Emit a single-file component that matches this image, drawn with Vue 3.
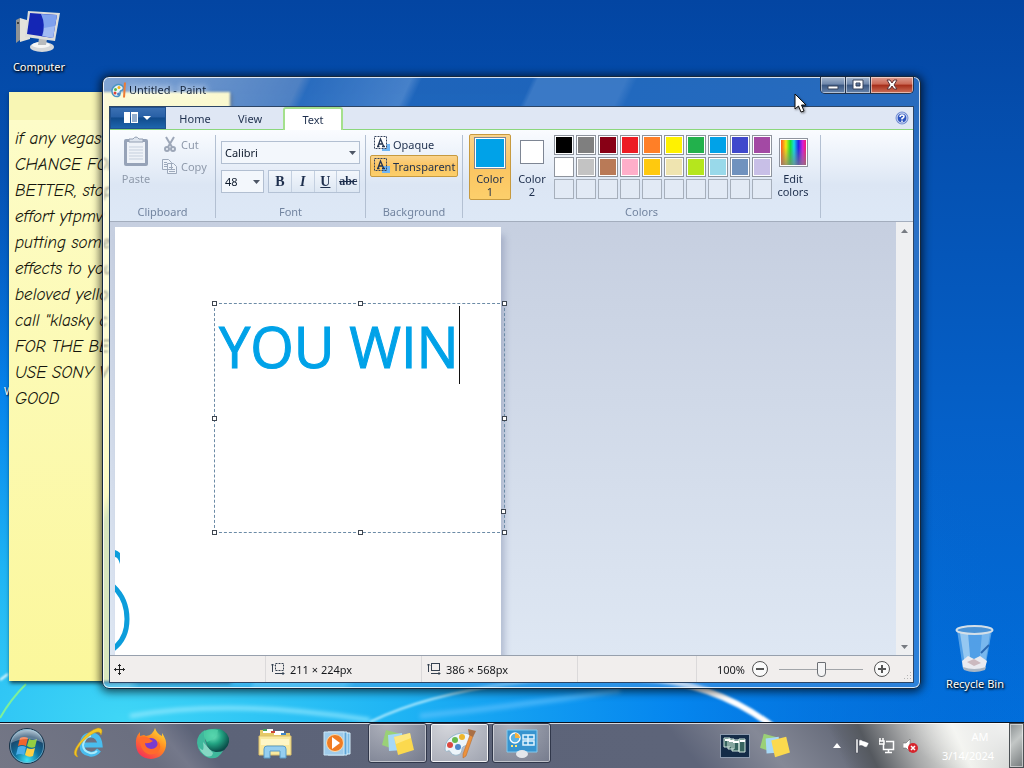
<template>
  <div class="screen">
    <svg class="wallpaper" viewBox="0 0 1024 768" preserveAspectRatio="none" aria-hidden="true">
      <defs>
        <linearGradient id="sky" x1="0" y1="0" x2="0" y2="1">
          <stop offset="0" stop-color="#0345a2" />
          <stop offset="0.2" stop-color="#0550b0" />
          <stop offset="0.55" stop-color="#0560c8" />
          <stop offset="1" stop-color="#0070de" />
        </linearGradient>
        <radialGradient id="glow" cx="0.12" cy="0.92" r="0.9">
          <stop offset="0" stop-color="#3fd6f6" />
          <stop offset="0.3" stop-color="#1fb4f4" />
          <stop offset="0.6" stop-color="#068af2" stop-opacity="0.85" />
          <stop offset="1" stop-color="#0566d0" stop-opacity="0" />
        </radialGradient>
        <filter id="soft"><feGaussianBlur stdDeviation="2" /></filter>
        <filter id="soft-edge"><feGaussianBlur stdDeviation="1" /></filter>
      </defs>
      <rect width="1024" height="768" fill="url(#sky)" />
      <rect y="150" width="1024" height="618" fill="url(#glow)" />
      <g fill="none" filter="url(#soft)">
        <path d="M130 716Q230 698 370 720" stroke="#9fecff" stroke-width="3" />
        <path d="M420 716Q520 706 620 690" stroke="#6cc6ff" stroke-width="5" opacity="0.6" />
      </g>
      <g fill="none" filter="url(#soft-edge)">
        <path d="M370 722Q440 688 560 678" stroke="#bdefff" stroke-width="2" />
        <path d="M640 678Q715 682 775 728" stroke="#fff" stroke-width="6" />
        <path d="M0 680L8 674" stroke="#fff" stroke-width="2" />
      </g>
      <path d="M0 718Q10 700 26 684" fill="none" stroke="#7df09a" stroke-width="2" />
    </svg>

    <main class="desktop">
      <a class="shortcut computer" href="#computer">
        <svg width="48" height="44" viewBox="0 0 48 44" aria-hidden="true">
          <path d="M1 10L5 8V30L1 33Z" fill="#8f9294" />
          <path d="M5 8L15 11V29L5 32Z" fill="#e4e3dc" />
          <circle cx="3" cy="13" r="1" fill="#222" />
          <ellipse cx="27" cy="37" rx="12" ry="5" fill="#d5d8da" />
          <ellipse cx="26" cy="35" rx="9" ry="3" fill="#f5f6f6" />
          <path d="M24 28L32 29L31 35H23Z" fill="#b8bbbd" />
          <path d="M13 1L45 3L40 31L10 27Z" fill="#dcdedb" />
          <path d="M15 3L42 5L38 28L12 24Z" fill="#1426b5" />
          <path d="M26 4L42 5L38 28L27 26Q31 15 26 4Z" fill="#7ea1ee" />
          <path d="M29 18L40 16L38 28L28 26Z" fill="#b9cdf6" opacity="0.6" />
        </svg>
        <span>Computer</span>
      </a>
      <span class="hidden-label">W</span>

      <article class="note">
        <p v-for="line in noteLines" :key="line">{{ line }}</p>
      </article>

      <a class="shortcut bin" href="#recycle-bin">
        <svg width="42" height="48" viewBox="0 0 42 48" aria-hidden="true">
          <path d="M3 5L9 44Q20 49 31 44L38 5Z" fill="#6eb2ec" opacity="0.75" />
          <path d="M6 8L11 40L17 42L14 8Z" fill="#c3e2f8" opacity="0.6" />
          <path d="M28 8L25 42L31 40L36 8Z" fill="#9fd0f6" opacity="0.5" />
          <path d="M8 36L14 31L20 34L26 31L33 36L31 43Q20 47 9 43Z" fill="#e9eaf0" />
          <path d="M13 37L20 34L27 38L20 41Z" fill="#cbb9bf" />
          <path d="M9 42Q20 46 32 42L31 45Q20 49 10 45Z" fill="#a9b6c4" />
          <ellipse cx="20.500" cy="5" rx="18" ry="4" fill="#4b93d6" stroke="#d4dfe8" stroke-width="2" />
          <path d="M27 28L35 20" stroke="#2a68b2" stroke-width="2" />
        </svg>
        <span>Recycle Bin</span>
      </a>

      <section class="window" aria-label="Untitled - Paint">
        <header class="titlebar">
          <svg class="app-icon" width="16" height="16" viewBox="0 0 32 32" aria-hidden="true">
            <path d="M2 19C1 9 12 3 20 6C28 10 25 16 19 18C16 20 22 26 14 29C7 30 2 26 2 19Z" fill="#e9f4fb" stroke="#4a94c4" stroke-width="3" />
            <circle cx="9" cy="15" r="3" fill="#57b848" /><circle cx="16" cy="11" r="3" fill="#f3b21c" />
            <circle cx="8" cy="22" r="3" fill="#dc4537" /><circle cx="15" cy="24" r="3" fill="#4e84c6" />
            <path d="M28 1L26 31" stroke="#ee7830" stroke-width="4" />
          </svg>
          <h1>Untitled - Paint</h1>
          <div class="window-buttons">
            <button type="button" aria-label="Minimize">
              <svg width="14" height="12" viewBox="0 0 14 12"><path d="M2 7H12V10H2Z" fill="#fff" stroke="#38445c" /></svg>
            </button>
            <button type="button" aria-label="Maximize">
              <svg width="14" height="12" viewBox="0 0 14 12"><path d="M2 1H12V10H2ZM5 4V7H9V4Z" fill="#fff" stroke="#38445c" fill-rule="evenodd" /></svg>
            </button>
            <button type="button" class="close" aria-label="Close">
              <svg width="14" height="12" viewBox="0 0 14 12"><path d="M2 1H5L7 4L9 1H12L9 6L12 10H9L7 7L5 10H2L5 6Z" fill="#fff" stroke="#5c3238" /></svg>
            </button>
          </div>
        </header>

        <div class="client">
          <nav class="tabs">
            <button type="button" class="file-menu" aria-label="Paint menu">
              <svg width="28" height="12" viewBox="0 0 28 12">
                <path d="M0 0H6V11H0ZM7 0H14V11H7Z" fill="#fff" />
                <path d="M8 3H13M8 5H13M8 7H13M8 9H13" stroke="#2c609f" />
                <path d="M19 4H27L23 8Z" fill="#fff" />
              </svg>
            </button>
            <button
              v-for="tab in tabs"
              :key="tab"
              type="button"
              class="tab"
              :class="{ active: tab === activeTab }"
              @click="activeTab = tab"
            >{{ tab }}</button>
            <button type="button" class="help" aria-label="Help">
              <svg width="14" height="14" viewBox="0 0 14 14">
                <circle cx="7" cy="7" r="6" fill="#2c55c0" stroke="#7793d6" />
                <circle cx="7" cy="7" r="5" fill="none" stroke="#e8eefb" />
                <path d="M5 6Q5 4 7 4T9 5.500Q9 6.500 7 7.500V8.500M7 9.500V11" fill="none" stroke="#fff" stroke-width="1.500" />
              </svg>
            </button>
          </nav>

          <div class="ribbon">
            <div class="group clipboard">
              <div class="group-body">
                <button type="button" class="paste" disabled>
                  <svg width="28" height="32" viewBox="0 0 28 32">
                    <rect x="2" y="3" width="24" height="27" rx="2" fill="#97a3b8" />
                    <rect x="5" y="6" width="18" height="21" fill="#eef2f8" />
                    <path d="M7 11H21M7 14H21M7 17H21M7 20H21M7 23H21" stroke="#c5cfdd" />
                    <path d="M7 6V3H11Q14 -1 17 3H21V6Z" fill="#dde4ee" stroke="#929eb1" />
                  </svg>
                  <span>Paste</span>
                </button>
                <div class="stack">
                  <button type="button" class="small" disabled>
                    <svg width="16" height="16" viewBox="0 0 16 16" fill="none" stroke="#9da7b8" stroke-width="2">
                      <path d="M4 1L10 11M12 1L6 11" /><circle cx="5" cy="13" r="2" /><circle cx="11" cy="13" r="2" />
                    </svg>
                    Cut
                  </button>
                  <button type="button" class="small" disabled>
                    <svg width="16" height="16" viewBox="0 0 16 16" fill="#eef3fa" stroke="#9da9bb">
                      <path d="M.5 1.500H6.500L9.500 4.500V11.500H.5ZM5.500 5.500H11.500L14.500 8.500V15.500H5.500Z" />
                      <path d="M2 4.500H5M2 6.500H5M2 8.500H5M7 9.500H11M7 11.500H13M7 13.500H13" />
                    </svg>
                    Copy
                  </button>
                </div>
              </div>
              <h2>Clipboard</h2>
            </div>

            <div class="group font">
              <div class="group-body font-body">
                <label class="combo">
                  <select v-model="family" aria-label="Font family"><option>Calibri</option></select>
                  <svg width="7" height="4" viewBox="0 0 7 4"><path d="M0 0H7L3.500 4Z" fill="#4d5665" /></svg>
                </label>
                <div class="font-row">
                  <label class="combo size">
                    <select v-model="size" aria-label="Font size"><option>48</option></select>
                    <svg width="7" height="4" viewBox="0 0 7 4"><path d="M0 0H7L3.500 4Z" fill="#4d5665" /></svg>
                  </label>
                  <div class="formats">
                    <button type="button" aria-label="Bold"><b>B</b></button>
                    <button type="button" aria-label="Italic"><i>I</i></button>
                    <button type="button" aria-label="Underline"><u>U</u></button>
                    <button type="button" aria-label="Strikethrough" class="strike"><s>abc</s></button>
                  </div>
                </div>
              </div>
              <h2>Font</h2>
            </div>

            <div class="group background">
              <div class="group-body stack">
                <button
                  v-for="mode in ['Opaque', 'Transparent']"
                  :key="mode"
                  type="button"
                  class="mode"
                  :class="{ picked: mode === background }"
                  :aria-pressed="mode === background"
                  @click="background = mode"
                >
                  <svg width="16" height="16" viewBox="0 0 16 16">
                    <path d="M8 8H16V15H8Z" fill="#70b5f3" />
                    <rect x=".5" y=".5" width="12" height="12" :fill="mode === 'Opaque' ? '#fff' : 'none'" stroke="#34425c" stroke-dasharray="2 1" />
                    <path d="M3 10.500H5.500M8 10.500H11M4 10L6.500 3L9.500 10M5 8H8" fill="none" stroke="#24344f" stroke-width="1.300" />
                  </svg>
                  {{ mode }}
                </button>
              </div>
              <h2>Background</h2>
            </div>

            <div class="group colors">
              <div class="group-body">
                <button type="button" class="color-slot picked">
                  <span class="chip big"></span>
                  <span>Color<br />1</span>
                </button>
                <button type="button" class="color-slot second">
                  <span class="chip"></span>
                  <span>Color<br />2</span>
                </button>
                <div class="palette">
                  <button
                    v-for="(c, i) in palette"
                    :key="i"
                    type="button"
                    :class="{ empty: !c }"
                    :style="{ backgroundColor: c }"
                    :aria-label="c || 'Custom color'"
                  ></button>
                </div>
                <button type="button" class="edit-colors">
                  <span class="rainbow"></span>
                  <span>Edit<br />colors</span>
                </button>
              </div>
              <h2>Colors</h2>
            </div>
          </div>

          <div class="workspace">
            <div class="view">
              <div class="paper">
                <svg class="stroke" width="20" height="120" viewBox="0 0 20 120" fill="none" aria-hidden="true">
                  <path d="M0 10Q3 11 5 13V24Q3 17 0 17Z" fill="#0c9ddb" />
                  <path d="M-2 46Q12 59 12 79T-2 109" stroke="#0c9ddb" stroke-width="5" />
                </svg>
                <div class="textbox">
                  <textarea v-model="text" aria-label="Canvas text" spellcheck="false"></textarea>
                  <span class="caret"></span>
                  <i v-for="h in handles" :key="h" class="handle" :class="h"></i>
                </div>
              </div>
            </div>
            <div class="scrollbar">
              <button type="button" aria-label="Scroll up">
                <svg width="7" height="4" viewBox="0 0 7 4"><path d="M0 4H7L3.500 0Z" fill="#777b82" /></svg>
              </button>
              <button type="button" aria-label="Scroll down">
                <svg width="7" height="4" viewBox="0 0 7 4"><path d="M0 0H7L3.500 4Z" fill="#777b82" /></svg>
              </button>
            </div>
          </div>

          <footer class="status">
            <div class="cell">
              <svg width="11" height="11" viewBox="0 0 11 11" stroke="#222" fill="none">
                <path d="M5.500 0V11M0 5.500H11M4 2L5.500 .5L7 2M4 9L5.500 10.500L7 9M2 4L.5 5.500L2 7M9 4L10.500 5.500L9 7" />
              </svg>
            </div>
            <div class="cell">
              <svg width="14" height="12" viewBox="0 0 14 12" fill="none" stroke="#34404f">
                <path d="M1.500 9V1M0 2.500L1.500 1L3 2.500M4 10.500H13M11.500 9L13 10.500L11.500 12" />
                <rect x="4.500" y=".5" width="8" height="7" stroke-dasharray="2 1" />
              </svg>
              211 × 224px
            </div>
            <div class="cell">
              <svg width="14" height="12" viewBox="0 0 14 12" fill="none" stroke="#34404f">
                <path d="M1.500 9V1M0 2.500L1.500 1L3 2.500M4 10.500H13M11.500 9L13 10.500L11.500 12" />
                <rect x="4.500" y=".5" width="8" height="7" />
              </svg>
              386 × 568px
            </div>
            <div class="cell filler"></div>
            <div class="zoom">
              <label for="zoom-range">{{ zoom * 2 }}%</label>
              <button type="button" aria-label="Zoom out">
                <svg width="16" height="16" viewBox="0 0 16 16" fill="#fafafa" stroke="#555"><circle cx="8" cy="8" r="7.500" /><path d="M4 8H12" stroke-width="2" /></svg>
              </button>
              <input id="zoom-range" v-model.number="zoom" type="range" min="0" max="100" />
              <button type="button" aria-label="Zoom in">
                <svg width="16" height="16" viewBox="0 0 16 16" fill="#fafafa" stroke="#555"><circle cx="8" cy="8" r="7.500" /><path d="M4 8H12M8 4V12" stroke-width="2" /></svg>
              </button>
              <svg class="grip" width="8" height="8" viewBox="0 0 8 8" fill="#b5b5b5"><path d="M6 0h1v1H6zM3 3h1v1H3zM6 3h1v1H6zM0 6h1v1H0zM3 6h1v1H3zM6 6h1v1H6z" /></svg>
            </div>
          </footer>
        </div>
      </section>

      <svg class="cursor" width="13" height="20" viewBox="0 0 13 20" aria-hidden="true">
        <path d="M1 1V16L4.500 13L7 19L10 18L7.500 12H12Z" fill="#fff" stroke="#111" />
      </svg>
    </main>

    <footer class="taskbar">
      <button type="button" class="start" aria-label="Start">
        <svg width="38" height="38" viewBox="0 0 38 38">
          <defs>
            <radialGradient id="orb" cx=".5" cy=".9" r=".9">
              <stop offset="0" stop-color="#3de3f5" /><stop offset=".4" stop-color="#0f719e" />
              <stop offset=".75" stop-color="#1a4468" /><stop offset="1" stop-color="#a8c3d4" />
            </radialGradient>
          </defs>
          <circle cx="19" cy="19" r="17.500" fill="url(#orb)" stroke="#173248" />
          <circle cx="19" cy="19" r="16.500" fill="none" stroke="#8dc0d8" opacity=".6" />
          <path d="M12 11Q16 9 20 11L18 19Q14 17 10 19Z" fill="#f0642c" />
          <path d="M21 12Q25 14 29 12L27 20Q23 22 19 19Z" fill="#93ce42" />
          <path d="M10 20Q14 18 18 20L16 28Q12 26 8 28Z" fill="#4aaeea" />
          <path d="M19 21Q23 23 27 21L25 29Q21 31 17 28Z" fill="#fcd044" />
          <path d="M3 16Q5 4 19 3T35 16Q19 8 3 16Z" fill="#fff" opacity=".3" />
        </svg>
      </button>
      <button type="button" class="pin" aria-label="Internet Explorer">
        <svg width="32" height="32" viewBox="0 0 32 32" fill="none">
          <path d="M26 23Q22 28 17 27Q9 26 9 18Q10 8 18 8Q26 8 27 18H11" stroke="#49bdee" stroke-width="5" />
          <path d="M24 24Q21 27 17 26Q10 24 10 18Q12 9 18 9" stroke="#a9ebfc" stroke-width="2" />
          <path d="M5 30Q-3 28 6 16Q16 3 25 1Q31 1 28 8Q27 3 21 6Q11 11 5 21Q2 27 5 30Z" fill="#f3c724" stroke="#cf9b12" stroke-width=".5" />
        </svg>
      </button>
      <button type="button" class="pin" aria-label="Firefox">
        <svg width="32" height="32" viewBox="0 0 32 32">
          <defs><linearGradient id="fox" x1=".9" y1="0" x2=".2" y2="1"><stop offset="0" stop-color="#ffe43c" /><stop offset=".45" stop-color="#ff8a20" /><stop offset="1" stop-color="#f52b5a" /></linearGradient></defs>
          <path d="M20 1Q22 7 27 9V6Q32 13 31 19Q29 31 16 32Q2 31 1 18Q0 10 5 5V9L9 8L11 9Q18 8 20 1Z" fill="url(#fox)" />
          <circle cx="16" cy="18" r="7" fill="#7a3bd0" />
          <path d="M5 10Q12 8 16 13L18 14Q14 17 10 16Q10 21 16 22Q23 22 23 14Q28 20 22 26Q13 30 8 23Q4 18 5 10Z" fill="#ff6b2c" />
        </svg>
      </button>
      <button type="button" class="pin" aria-label="Browser">
        <svg width="34" height="32" viewBox="0 0 34 32">
          <defs><radialGradient id="gem" cx=".35" cy=".3" r=".7"><stop offset="0" stop-color="#79ecc4" /><stop offset=".5" stop-color="#23a483" /><stop offset="1" stop-color="#0a4d49" /></radialGradient></defs>
          <path d="M9 3Q1 7 1 16Q2 27 13 31Q22 33 27 24Q16 27 11 19Q8 12 9 3Z" fill="#3fb89c" />
          <path d="M3 20Q9 28 7 15L17 26Q16 31 10 29Q5 26 3 20Z" fill="#b5ece0" opacity=".6" />
          <path d="M8 4Q14 1 24 2Q34 6 33 15Q31 25 20 25Q12 24 10 15Z" fill="url(#gem)" />
          <path d="M8 4Q14 1 22 3Q22 11 11 15Q7 10 8 4Z" fill="#4fcfa8" opacity=".8" />
        </svg>
      </button>
      <button type="button" class="pin" aria-label="Windows Explorer">
        <svg width="34" height="32" viewBox="0 0 34 32">
          <path d="M2 3H13L15 6H32V28H2Z" fill="#e6c967" />
          <path d="M5 2H15V6H5ZM16 4H26V8H16Z" fill="#fff" /><path d="M5 2H9V4H5Z" fill="#3aa25b" /><path d="M13 4H17V6H13Z" fill="#cf4838" /><path d="M23 6H28V8H23Z" fill="#3f86c9" />
          <path d="M1 9H33V28H1Z" fill="#f9e9a0" stroke="#dbc06a" />
          <path d="M3 12H31V18H3Z" fill="#fff9cf" opacity=".8" />
          <path d="M6 31V22Q6 19 9 19H25Q28 19 28 22V31H22V24H12V31Z" fill="#95cef0" stroke="#5a9cc8" />
        </svg>
      </button>
      <button type="button" class="pin" aria-label="Media Player">
        <svg width="30" height="28" viewBox="0 0 30 28">
          <path d="M9 4H28V25H9Z" fill="#7dbbe5" stroke="#d6effc" /><path d="M6 3H25V26H6Z" fill="#5fa6d8" stroke="#d6effc" />
          <path d="M2 3H22V26H2Z" fill="#9fcbea" stroke="#cbe7f7" />
          <circle cx="13" cy="14" r="8.500" fill="#f07c22" stroke="#fbdcae" /><path d="M10 8L18 14L10 20Z" fill="#fff" />
        </svg>
      </button>
      <button type="button" class="task notes" aria-label="Sticky Notes">
        <svg width="34" height="30" viewBox="0 0 34 30">
          <path d="M5 2L20 6L15 22L1 17Z" fill="#9ad077" /><path d="M7 7L21 5L22 22L8 23Z" fill="#a6d8f6" />
          <path d="M13 9L29 5L33 22L17 27Z" fill="#fbd94e" /><path d="M13 9L29 5L30 10L15 16Z" fill="#fff0a1" opacity=".6" />
        </svg>
      </button>
      <button type="button" class="task current" aria-label="Paint">
        <svg width="34" height="32" viewBox="0 0 34 32">
          <path d="M2 21C2 12 12 6 20 6C28 6 31 11 27 16C24 20 19 18 19 22C19 27 15 29 11 28C7 27 8 23 5 24C3 25 2 24 2 21Z" fill="#edf5fa" stroke="#97b6ca" />
          <circle cx="7" cy="18" r="3" fill="#db4941" /><circle cx="12" cy="13" r="3" fill="#69b94d" /><circle cx="19" cy="10" r="3" fill="#edb62d" /><circle cx="15" cy="20" r="3" fill="#4d88cb" />
          <path d="M27 8L30 9L23 29L20 31L20 27Z" fill="#ec923c" stroke="#b96524" stroke-width=".5" /><path d="M25 2L33 4L30 10L26 8Z" fill="#a96f45" />
        </svg>
      </button>
      <button type="button" class="task" aria-label="Control Panel">
        <svg width="34" height="32" viewBox="0 0 34 32">
          <path d="M2 3H32V25H2Z" fill="#3794cf" stroke="#82c9ed" /><circle cx="10" cy="11" r="5" fill="#5bb1e2" stroke="#fff" stroke-width="1.500" />
          <path d="M10 11V6A5 5 0 0 1 15 11Z" fill="#f6b13e" /><path d="M18 8H29V12H18ZM18 14H29V18H18ZM23 8V18" fill="none" stroke="#e1f4ff" stroke-width="1.500" />
          <path d="M6 19H8M10 19H12" stroke="#ffe678" stroke-width="2" /><ellipse cx="17" cy="27" rx="6" ry="4" fill="#e4e7eb" />
        </svg>
      </button>

      <div class="tray">
        <button type="button" class="deskband" aria-label="Window switcher">
          <svg width="30" height="24" viewBox="0 0 30 24">
            <rect x=".5" y=".5" width="29" height="23" fill="#142c48" stroke="#8c9aae" />
            <g fill="#37645f" stroke="#d4e8e0"><path d="M4 4H10V13H4ZM8 5H14V15H8ZM12 6H19V17H12ZM19 5H25V18H19Z" /></g>
            <path d="M5 6H10M9 7H14M13 8H19M20 7H25" stroke="#fff" stroke-width="2" />
          </svg>
        </button>
        <button type="button" class="deskband second-band" aria-label="Notes">
          <svg width="32" height="28" viewBox="0 0 34 30">
            <path d="M5 2L20 6L15 22L1 17Z" fill="#9ad077" /><path d="M7 7L21 5L22 22L8 23Z" fill="#a6d8f6" />
            <path d="M13 9L29 5L33 22L17 27Z" fill="#fbd94e" />
          </svg>
        </button>
        <button type="button" class="tray-icon arrow" aria-label="Show hidden icons">
          <svg width="8" height="5" viewBox="0 0 8 5"><path d="M0 5L4 0L8 5Z" fill="#fff" /></svg>
        </button>
        <button type="button" class="tray-icon" aria-label="Action Center">
          <svg width="16" height="16" viewBox="0 0 16 16"><path d="M1 1H3V15H1ZM4 2Q6 1 8 3H9L14 5L12 9Q10 10 8 8Q6 7 4 8Z" fill="#fff" stroke="#3d414c" stroke-width=".5" /></svg>
        </button>
        <button type="button" class="tray-icon" aria-label="Network">
          <svg width="16" height="16" viewBox="0 0 16 16" fill="none" stroke="#fff" stroke-width="1.500"><path d="M7 3.500H14.500V11.500H4.500V6M6 14.500H13M9.500 12V14M1 0V3M4 0V3M0 3H5V6H0Z" /></svg>
        </button>
        <button type="button" class="tray-icon" aria-label="Volume muted">
          <svg width="18" height="16" viewBox="0 0 18 16"><path d="M0 5H3L7 1V14L3 10H0Z" fill="#fff" stroke="#555" stroke-width=".5" /><circle cx="10" cy="10" r="5" fill="#d6252d" /><path d="M8 8L12 12M12 8L8 12" stroke="#fff" stroke-width="1.500" /></svg>
        </button>
        <div class="clock"><span>AM</span><span>3/14/2024</span></div>
        <button type="button" class="show-desktop" aria-label="Show desktop"></button>
      </div>
    </footer>
  </div>
</template>

<script setup>
import { ref } from "vue";

const tabs = ["Home", "View", "Text"];
const activeTab = ref("Text");
const family = ref("Calibri");
const size = ref("48");
const background = ref("Transparent");
const text = ref("YOU WIN");
// slider midpoint is 100%
const zoom = ref(50);

const handles = ["nw", "n", "ne", "w", "e", "sw", "s", "se", "page"];

const palette = [
  "#000000", "#7f7f7f", "#880015", "#ed1c24", "#ff7f27", "#fff200", "#22b14c", "#00a2e8", "#3f48cc", "#a349a4",
  "#ffffff", "#c3c3c3", "#b97a57", "#ffaec9", "#ffc90e", "#efe4b0", "#b5e61d", "#99d9ea", "#7092be", "#c8bfe7",
  ...Array(10).fill(null),
];

const noteLines = [
  "if any vegas",
  "CHANGE FOR",
  "BETTER, stop",
  "effort ytpmv",
  "putting some",
  "effects to you",
  "beloved yello",
  'call "klasky c',
  "FOR THE BE",
  "USE SONY V",
  "GOOD",
];
</script>

<style>
body {
  margin: 0;
}
</style>

<style scoped>
.screen {
  position: relative;
  display: flex;
  flex-direction: column;
  height: 100vh;
  overflow: hidden;
  font-family: "Noto Sans", "Open Sans", sans-serif;
  font-size: 11px;
  line-height: 13px;
  color: #1e2f4d;
}

.screen *,
.screen *::before {
  box-sizing: border-box;
}

button {
  border: 0;
  padding: 0;
  margin: 0;
  background: none;
  font: inherit;
  color: inherit;
}

svg {
  display: block;
  flex: none;
}

h1,
h2,
p {
  margin: 0;
  font-weight: 400;
}

.wallpaper {
  position: absolute;
  inset: 0;
  width: 100%;
  height: 100%;
}

.desktop {
  position: relative;
  flex: 1;
  min-height: 0;
}

.shortcut {
  position: absolute;
  display: flex;
  flex-direction: column;
  align-items: center;
  gap: 6px;
  width: 76px;
  font-size: 11px;
  color: #fff;
  text-decoration: none;
  text-shadow: 1px 1px 2px #000, 0 1px 3px #000;
}

.computer {
  left: 1px;
  top: 10px;
}

.bin {
  right: 11px;
  bottom: 32px;
  gap: 4px;
}

.hidden-label {
  position: absolute;
  left: 4px;
  top: 384px;
  color: #fff;
  text-shadow: 1px 1px 2px #000;
}

.note {
  position: absolute;
  left: 9px;
  top: 92px;
  bottom: 41px;
  width: 221px;
  padding: 34px 6px 0;
  background: linear-gradient(#f8f6b4 0, #f8f6b4 28px, #fdfcc8 28px, #fbf79b 100%);
  box-shadow: 1px 2px 4px rgba(0, 0, 0, 0.7);
  font-family: "Segoe Print", "Comic Neue", "Lato", cursive;
  font-style: italic;
  font-size: 17px;
  line-height: 26px;
  color: #14140c;
}

.window {
  position: absolute;
  left: 102px;
  top: 76px;
  right: 103px;
  bottom: 33px;
  display: flex;
  flex-direction: column;
  padding: 0 6px 5px;
  border: 1px solid #16283c;
  border-radius: 7px;
  background:
    linear-gradient(115deg, rgba(255, 255, 255, 0.5) 0, rgba(255, 255, 255, 0.3) 180px, rgba(130, 185, 240, 0.3) 190px, rgba(170, 210, 250, 0.4) 280px, rgba(80, 150, 220, 0.35) 290px, rgba(80, 150, 220, 0.35) 390px, rgba(140, 190, 240, 0.4) 395px, rgba(140, 190, 240, 0.4) 475px, rgba(80, 150, 220, 0.4) 485px, rgba(110, 160, 220, 0.4));
  backdrop-filter: blur(1px);
  box-shadow: inset 0 0 0 1px rgba(255, 255, 255, 0.8), 0 1px 8px 2px rgba(0, 0, 0, 0.65);
}

.titlebar {
  display: flex;
  align-items: flex-start;
  height: 29px;
}

.app-icon {
  margin: 5px 2px 0;
}

.titlebar h1 {
  flex: 1;
  padding-top: 6px;
  font-size: 11px;
  color: #14243a;
  text-shadow: 0 0 6px #fff, 0 0 8px #fff;
}

.window-buttons {
  display: flex;
  border: 1px solid #22324a;
  border-top: 0;
  border-radius: 0 0 5px 5px;
  overflow: hidden;
}

.window-buttons button {
  display: grid;
  place-items: center;
  width: 25px;
  height: 16px;
  border-right: 1px solid #22324a;
  background: linear-gradient(#a5b7cf, #6e87ab 45%, #38557f 50%, #6885ad);
  box-shadow: inset 0 0 0 1px rgba(255, 255, 255, 0.5);
}

.window-buttons .close {
  width: 42px;
  border-right: 0;
  background: linear-gradient(#dd9d90, #cb6855 45%, #a52c19 50%, #cd7059);
}

.client {
  flex: 1;
  display: flex;
  flex-direction: column;
  min-height: 0;
  border: 1px solid #2c4566;
  background: #dfe8f5;
}

.tabs {
  display: flex;
  height: 23px;
  border-bottom: 1px solid #8bd77c;
  background: #dfe7f4;
  font-size: 11px;
}

.file-menu {
  display: grid;
  place-items: center;
  width: 56px;
  height: 22px;
  background: linear-gradient(#3e72b4, #2860a6 45%, #114b8c 50%, #1f68b0);
  box-shadow: inset 0 0 0 1px #20518f;
}

.tab {
  width: 52px;
  height: 22px;
}

.file-menu + .tab {
  width: 58px;
}

.tab.active {
  width: 60px;
  height: 23px;
  margin-left: 7px;
  border: 2px solid #a4e08c;
  border-bottom: 0;
  border-radius: 3px 3px 0 0;
  background: #fff;
}

.help {
  margin-left: auto;
  padding: 0 4px;
}

.ribbon {
  display: flex;
  height: 92px;
  padding: 5px 0 3px;
  border-bottom: 1px solid #a3adbd;
  background: linear-gradient(#fafcff, #e7eef8 40%, #dce6f4 60%, #dde8f6);
}

.group {
  display: flex;
  flex-direction: column;
  border-right: 1px solid #b3c0d2;
}

.group h2 {
  margin-top: auto;
  font-size: 11px;
  text-align: center;
  color: #7385a0;
}

.group-body {
  display: flex;
}

.clipboard {
  width: 106px;
  color: #8f9aab;
}

.paste {
  display: flex;
  flex-direction: column;
  align-items: center;
  gap: 4px;
  width: 52px;
  padding-top: 1px;
}

.stack {
  display: flex;
  flex-direction: column;
  margin-top: -2px;
}

.small {
  display: flex;
  align-items: center;
  gap: 3px;
  height: 22px;
}

.font {
  width: 150px;
}

.font-body {
  flex-direction: column;
  gap: 6px;
  padding: 6px 5px 0;
}

.combo {
  position: relative;
  display: block;
}

.combo select {
  display: block;
  width: 100%;
  height: 23px;
  padding: 0 3px;
  border: 1px solid #b2bfd1;
  border-radius: 0;
  background: #f3f7fc;
  appearance: none;
  font: inherit;
  color: #0e1a2c;
}

.combo svg {
  position: absolute;
  right: 4px;
  top: 10px;
  pointer-events: none;
}

.size {
  width: 43px;
}

.font-row {
  display: flex;
  justify-content: space-between;
}

.formats {
  display: flex;
  width: 92px;
  border: 1px solid #b4c2d5;
}

.formats button {
  flex: 1;
  border-right: 1px solid #c4d0e0;
  background: linear-gradient(#f3f7fc, #dde7f3);
  font-family: "Liberation Serif", serif;
  font-size: 14px;
  font-weight: 700;
}

.formats button:last-child {
  border-right: 0;
}

.formats .strike {
  font-size: 12px;
}

.background {
  width: 97px;
}

.background .group-body {
  padding: 0 4px;
}

.mode {
  display: flex;
  align-items: center;
  gap: 3px;
  height: 22px;
  padding: 0 3px;
  border: 1px solid transparent;
  border-radius: 2px;
}

.picked {
  border-color: #c79a3f;
  background: linear-gradient(#fad48c, #fbc562 50%, #fccf6b);
}

.colors {
  width: 358px;
}

.colors .group-body {
  padding-left: 6px;
}

.color-slot {
  display: flex;
  flex-direction: column;
  align-items: center;
  justify-content: space-between;
  width: 42px;
  height: 66px;
  margin-top: -1px;
  padding: 2px 0 1px;
  border: 1px solid transparent;
  border-radius: 2px;
}

.color-slot.picked {
  border-color: #c79a3f;
}

.color-slot.second {
  padding-top: 5px;
}

.chip {
  width: 24px;
  height: 24px;
  border: 1px solid #7e8694;
  background: #fff;
}

.chip.big {
  width: 32px;
  height: 32px;
  background: #00a2e8;
  box-shadow: inset 0 0 0 1px #fff;
}

.palette {
  display: grid;
  grid-template-columns: repeat(10, 20px);
  grid-auto-rows: 20px;
  gap: 2px;
  margin-left: 1px;
}

.palette button {
  border: 1px solid #8e949d;
  box-shadow: inset 0 0 0 1px #fff;
}

.palette .empty {
  border-color: #a6afbb;
  background: #e2eaf5;
  box-shadow: none;
}

.edit-colors {
  display: flex;
  flex-direction: column;
  align-items: center;
  gap: 5px;
  width: 42px;
  padding-top: 3px;
}

.rainbow {
  width: 29px;
  height: 29px;
  border: 1px solid #8f949e;
  box-shadow: inset 0 0 0 1px #fff;
  background:
    linear-gradient(transparent 30%, rgba(128, 128, 128, 0.75)),
    linear-gradient(90deg, #ff3a20, #f5e510 22%, #19df2e 38%, #16d8e8 52%, #2125e6 68%, #d41fd8 84%, #ff1c4c);
}

.workspace {
  flex: 1;
  display: flex;
  min-height: 0;
  background: linear-gradient(#c6cfe0, #dee7f3);
}

.view {
  flex: 1;
  min-width: 0;
  padding: 5px 0 0 5px;
  overflow: hidden;
}

.paper {
  position: relative;
  width: 386px;
  height: 568px;
  background: #fff;
  box-shadow: 4px 8px 6px rgba(130, 142, 172, 0.45);
}

.stroke {
  position: absolute;
  left: 0;
  top: 313px;
}

.textbox {
  position: absolute;
  left: 99px;
  top: 76px;
  width: 291px;
  height: 230px;
  border: 1px dashed #6c8ba6;
}

.textbox textarea {
  display: block;
  width: 100%;
  height: 100%;
  padding: 4px;
  border: 0;
  outline: 0;
  resize: none;
  background: none;
  font-family: "Open Sans", sans-serif;
  font-size: 56px;
  line-height: 76px;
  color: #00a2e8;
  -webkit-text-stroke: 1px #00a2e8;
}

.caret {
  position: absolute;
  left: 244px;
  top: 2px;
  width: 1px;
  height: 78px;
  background: #111;
}

.handle {
  position: absolute;
  left: -3px;
  top: -3px;
  width: 5px;
  height: 5px;
  border: 1px solid #3f4650;
  background: #fff;
}

.n,
.s {
  left: 143px;
}

.ne,
.e,
.se {
  left: 287px;
}

.w,
.e {
  top: 112px;
}

.sw,
.s,
.se {
  top: 226px;
}

.page {
  left: 286px;
  top: 205px;
}

.scrollbar {
  display: flex;
  flex-direction: column;
  justify-content: space-between;
  width: 17px;
  background: #eeeff1;
}

.scrollbar button {
  display: grid;
  place-items: center;
  height: 17px;
}

.status {
  display: flex;
  height: 27px;
  border-top: 1px solid #97a0ad;
  background: #f1eeed;
  font-size: 11px;
  color: #16181c;
}

.cell {
  display: flex;
  align-items: center;
  gap: 5px;
  width: 156px;
  padding: 0 5px;
  border-right: 1px solid #dbd9da;
}

.cell:first-child {
  padding: 0 4px;
}

.filler {
  flex: 1;
}

.zoom {
  display: flex;
  align-items: center;
  gap: 7px;
  padding-left: 20px;
}

.zoom input {
  width: 84px;
  height: 16px;
  margin: 0 4px;
  appearance: none;
  background: linear-gradient(#a2a5a9, #a2a5a9) center / 100% 1px no-repeat;
}

.zoom input::-webkit-slider-thumb {
  appearance: none;
  width: 9px;
  height: 15px;
  border: 1px solid #6c6f74;
  border-radius: 1px 1px 4px 4px;
  background: #f4f4f5;
}

.grip {
  align-self: flex-end;
  margin: 0 1px 2px 7px;
}

.cursor {
  position: absolute;
  right: 217px;
  top: 93px;
  filter: drop-shadow(1px 1px 1px rgba(0, 0, 0, 0.5));
}

.taskbar {
  position: relative;
  display: flex;
  align-items: center;
  height: 46px;
  border-top: 1px solid #081220;
  background:
    radial-gradient(ellipse 120px 60px at 100% 0, rgba(255, 255, 255, 0.9), transparent),
    linear-gradient(65deg, transparent 81%, #55595f 84%, #a5a6a7 88%, #eff0eb 93%, #c9cbc9 97%, #b9bbba),
    linear-gradient(50deg, #747786 0, #6b6f80 15%, #74788a 18%, #5c6378 21%, #5d6479 66%, #858997 74%, #666b7a 82%);
  box-shadow: inset 0 1px 0 rgba(255, 255, 255, 0.75);
}

.start {
  width: 58px;
  padding-left: 8px;
}

.pin {
  display: grid;
  place-items: center;
  width: 62px;
  height: 44px;
  padding-bottom: 6px;
}

.task {
  display: grid;
  place-items: center;
  width: 59px;
  height: 40px;
  margin: 0 3px 6px 0;
  border: 1px solid #30374a;
  border-radius: 3px;
  background: radial-gradient(ellipse at 30% 0, rgba(255, 255, 255, 0.5), rgba(255, 255, 255, 0.15));
  box-shadow: inset 0 0 0 1px rgba(255, 255, 255, 0.5);
}

.current {
  background: radial-gradient(ellipse at 30% 0, rgba(255, 255, 255, 0.75), rgba(255, 255, 255, 0.4));
  box-shadow: inset 0 0 0 1px rgba(255, 255, 255, 0.85);
}

.tray {
  display: flex;
  align-items: center;
  align-self: stretch;
  margin-left: auto;
}

.deskband {
  margin-right: 9px;
}

.second-band {
  margin-right: 42px;
}

.tray-icon {
  width: 24px;
}

.tray-icon.arrow {
  width: 22px;
}

.clock {
  display: flex;
  flex-direction: column;
  gap: 6px;
  width: 82px;
  padding-top: 1px;
  text-align: center;
  color: #fff;
}

.clock span:first-child {
  padding-left: 24px;
}

.show-desktop {
  width: 15px;
  height: 100%;
  border: 1px solid #4b5054;
  background: linear-gradient(135deg, #8b9092, #c3c7c6 40%, #74797b);
  box-shadow: inset 0 0 0 1px rgba(255, 255, 255, 0.5);
}
</style>
